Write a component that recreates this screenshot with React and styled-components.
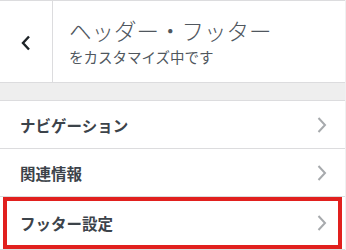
import React from 'react';
import styled, { createGlobalStyle } from 'styled-components';

const GlobalStyle = createGlobalStyle`
  html, body {
    margin: 0;
    padding: 0;
    background: #f0f0f1;
  }
  body {
    font-family: "Noto Sans CJK JP", "Noto Sans", sans-serif;
  }
`;

const sections = [
  { id: 'nav', label: 'ナビゲーション' },
  { id: 'related', label: '関連情報' },
  { id: 'footer', label: 'フッター設定', highlight: true },
];

function BackIcon() {
  return (
    <svg width="10" height="16" viewBox="0 0 10 16">
      <path d="M8 1.5 L2 8 L8 14.5" fill="none" stroke="#1d2327" strokeWidth="2.4" />
    </svg>
  );
}

function ChevronIcon() {
  return (
    <svg width="10" height="16" viewBox="0 0 10 16">
      <path d="M1.5 1 L8 8 L1.5 15" fill="none" stroke="#a7aaad" strokeWidth="2" />
    </svg>
  );
}

function App() {
  return (
    <>
      <GlobalStyle />
      <Panel>
        <Header>
          <BackButton aria-label="戻る">
            <BackIcon />
          </BackButton>
          <TitleBlock>
            <Title>ヘッダー・フッター</Title>
            <Subtitle>をカスタマイズ中です</Subtitle>
          </TitleBlock>
        </Header>
        <Spacer />
        <SectionList>
          {sections.map((s) => (
            <Section key={s.id} $highlight={s.highlight}>
              <SectionLabel>{s.label}</SectionLabel>
              <ChevronIcon />
            </Section>
          ))}
        </SectionList>
      </Panel>
    </>
  );
}

const Panel = styled.div`
  width: 345px;
  background: #eeeeee;
`;

const Header = styled.header`
  display: flex;
  height: 81px;
  background: #fff;
  border-top: 1px solid #dcdcde;
  border-bottom: 1px solid #dcdcde;
`;

const BackButton = styled.div`
  width: 53px;
  display: flex;
  align-items: center;
  justify-content: center;
  padding-top: 2px;
  box-sizing: border-box;
  border-right: 1px solid #dcdcde;
`;

const TitleBlock = styled.div`
  display: flex;
  flex-direction: column;
  justify-content: center;
  padding-left: 16px;
  color: #50575e;
`;

const Title = styled.div`
  font-size: 22.5px;
  line-height: 28px;
  font-weight: 300;
`;

const Subtitle = styled.div`
  font-size: 14.5px;
  line-height: 20px;
  margin-top: 3px;
`;

const Spacer = styled.div`
  height: 17px;
`;

const SectionList = styled.ul`
  list-style: none;
  margin: 0;
  padding: 0;
  background: #fff;
  border-top: 1px solid #dcdcde;
`;

const Section = styled.li`
  position: relative;
  display: flex;
  align-items: center;
  justify-content: space-between;
  height: ${(p) => (p.$highlight ? '52px' : '47px')};
  padding: 0 18px 0 20px;
  border-bottom: 1px solid #dcdcde;

  ${(p) =>
    p.$highlight &&
    `
    &::after {
      content: '';
      position: absolute;
      top: 0;
      left: 3px;
      right: 3px;
      bottom: 0;
      border: 4px solid #e1201e;
    }
  `}
`;

const SectionLabel = styled.span`
  font-size: 15.5px;
  font-weight: 700;
  color: #3c434a;
`;

export default App;
